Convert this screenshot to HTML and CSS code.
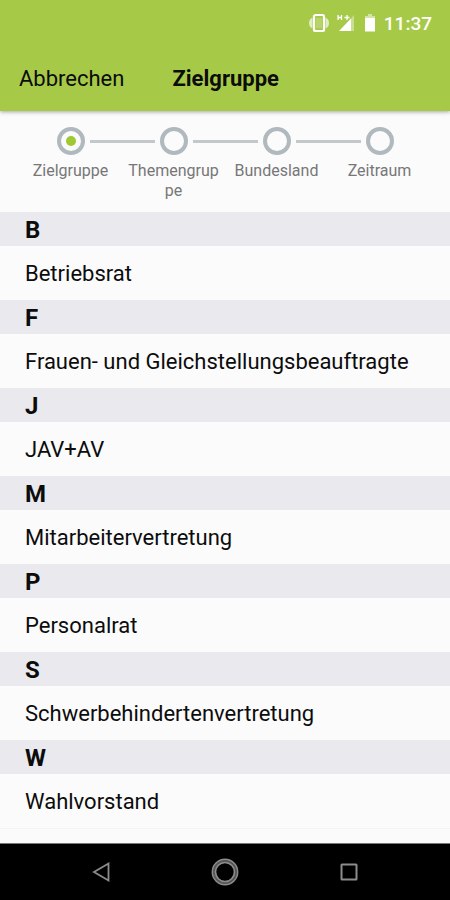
FILE: index.html
```html
<!DOCTYPE html>
<html lang="de">
<head>
  <meta charset="UTF-8" />
  <title>Zielgruppe</title>
  <meta name="viewport" content="width=device-width, initial-scale=1.0" />
  <link rel="stylesheet" href="styles.css">
</head>
<body>
  <header class="top">
    <div class="status-bar">
      <svg class="vibrate" width="22" height="20" viewBox="0 0 22 20">
        <path d="M4.500 4.500Q1 6 1 10t3.500 5.500zM17.500 4.500Q21 6 21 10t-3.500 5.500z" fill="#fff" opacity="0.65" />
        <rect x="6" y="2" width="10" height="16" rx="1.500" fill="none" stroke="#fff" stroke-width="2.200" />
        <rect x="8" y="5" width="6" height="10" fill="#fff" opacity="0.2" />
      </svg>
      <svg class="signal" width="18" height="18" viewBox="0 0 18 18">
        <path d="M17 1v16H3z" fill="#fff" opacity="0.4" />
        <path d="M14 4.500V17H2z" fill="#fff" />
        <path d="M1 1v5M4.500 1v5M1 3.500h3.500M7.500 3.500h5M10 1v5" stroke="#fff" stroke-width="1.300" fill="none" />
      </svg>
      <svg class="battery" width="12" height="18" viewBox="0 0 12 18">
        <path d="M4 0h4v2h3v3H1V2h3z" fill="#fff" opacity="0.5" />
        <path d="M1 4h10v13.500H1z" fill="#fff" />
      </svg>
      <span class="clock">11:37</span>
    </div>
    <div class="toolbar">
      <button type="button" class="cancel">Abbrechen</button>
      <h1>Zielgruppe</h1>
    </div>
  </header>

  <ol class="steps">
    <li class="step active" aria-current="step">
      <div class="rail"><span class="dot"></span></div>
      <span class="label">Zielgruppe</span>
    </li>
    <li class="step">
      <div class="rail"><span class="dot"></span></div>
      <span class="label">Themengruppe</span>
    </li>
    <li class="step">
      <div class="rail"><span class="dot"></span></div>
      <span class="label">Bundesland</span>
    </li>
    <li class="step">
      <div class="rail"><span class="dot"></span></div>
      <span class="label">Zeitraum</span>
    </li>
  </ol>

  <main class="groups">
    <h2>B</h2>
    <button type="button" class="item">Betriebsrat</button>
    <h2>F</h2>
    <button type="button" class="item">Frauen- und Gleichstellungsbeauftragte</button>
    <h2>J</h2>
    <button type="button" class="item">JAV+AV</button>
    <h2>M</h2>
    <button type="button" class="item">Mitarbeitervertretung</button>
    <h2>P</h2>
    <button type="button" class="item">Personalrat</button>
    <h2>S</h2>
    <button type="button" class="item">Schwerbehindertenvertretung</button>
    <h2>W</h2>
    <button type="button" class="item">Wahlvorstand</button>
  </main>

  <nav class="nav-bar">
    <button type="button" aria-label="Zurück">
      <svg width="28" height="28" viewBox="0 0 28 28">
        <path d="M21.500 5.500v17L7 14z" fill="none" stroke="#8c8c8c" stroke-width="1.800" />
      </svg>
    </button>
    <button type="button" aria-label="Startseite">
      <svg width="28" height="28" viewBox="0 0 28 28">
        <circle cx="14" cy="14" r="11" fill="none" stroke="#555" stroke-width="4" />
        <circle cx="14" cy="14" r="12.700" fill="none" stroke="#8c8c8c" stroke-width="1.400" />
        <circle cx="14" cy="14" r="9.500" fill="none" stroke="#8c8c8c" stroke-width="1.600" />
      </svg>
    </button>
    <button type="button" aria-label="Letzte Apps">
      <svg width="28" height="28" viewBox="0 0 28 28">
        <rect x="6.500" y="6.500" width="15" height="15" rx="0.500" fill="none" stroke="#8c8c8c" stroke-width="2" />
      </svg>
    </button>
  </nav>
</body>
</html>
```
FILE: styles.css
```css
:root {
  --green: #a6ca48;
  --bg: #fbfbfc;
  --band: #eae9ee;
  --ring: #b0b9be;
  --line: #c3c9cb;
  --muted: #777;
  --text: #0c0c0c;
}
* {
  box-sizing: border-box;
}
body {
  margin: 0;
  min-height: 100vh;
  display: flex;
  flex-direction: column;
  font-family: Roboto, "Liberation Sans", sans-serif;
  background: var(--bg);
  color: var(--text);
}
button {
  margin: 0;
  padding: 0;
  border: none;
  background: none;
  color: inherit;
  font: inherit;
  cursor: pointer;
}
.top {
  background: var(--green);
  box-shadow: 0 1px 4px rgba(0, 0, 0, 0.35);
}
.status-bar {
  display: flex;
  align-items: center;
  justify-content: flex-end;
  height: 46px;
  padding-right: 18px;
  color: #fff;
}
.signal {
  margin-left: 7px;
}
.battery {
  margin-left: 9px;
}
.clock {
  margin-left: 8px;
  font-size: 19px;
  font-weight: 500;
}
.toolbar {
  display: flex;
  align-items: center;
  gap: 48px;
  height: 65px;
  padding: 0 19px;
  font-size: 22px;
}
.toolbar h1 {
  margin: 0;
  font-size: 22px;
  font-weight: 700;
}
.steps {
  display: flex;
  margin: 0;
  padding: 16px 19px 11px;
  list-style: none;
}
.step {
  flex: 1;
  display: flex;
  flex-direction: column;
  align-items: center;
}
.rail {
  display: flex;
  align-items: center;
  gap: 5px;
  width: 100%;
}
.rail::before,
.rail::after {
  content: "";
  flex: 1;
  height: 3px;
  background: var(--line);
}
.step:first-child .rail::before,
.step:last-child .rail::after {
  background: none;
}
.dot {
  display: flex;
  align-items: center;
  justify-content: center;
  width: 28px;
  height: 28px;
  border: 4px solid var(--ring);
  border-radius: 50%;
}
.active .dot::before {
  content: "";
  width: 10px;
  height: 10px;
  border-radius: 50%;
  background: #9fc832;
}
.label {
  padding: 6px 4px 0;
  color: var(--muted);
  font-size: 16px;
  line-height: 20px;
  text-align: center;
  overflow-wrap: anywhere;
}
.groups {
  flex: 1;
}
.groups h2 {
  margin: 0;
  padding: 2px 25px 0;
  background: var(--band);
  font-size: 24px;
  font-weight: 700;
  line-height: 32px;
}
.item {
  display: block;
  width: 100%;
  padding: 2px 25px 0;
  font-size: 22px;
  line-height: 52px;
  text-align: left;
}
.item:last-child {
  border-bottom: 1px solid #f4f4f5;
}
.nav-bar {
  display: flex;
  align-items: center;
  justify-content: center;
  gap: 96px;
  height: 57px;
  border-top: 1px solid #777;
  background: #000;
}
.nav-bar button,
.nav-bar svg {
  display: block;
}
```
